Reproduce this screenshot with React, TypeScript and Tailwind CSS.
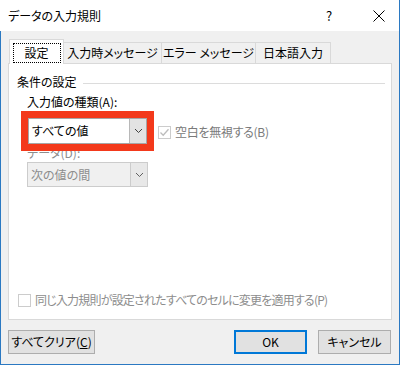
import React from "react";

const font = "font-['Meiryo_UI','Noto_Sans_CJK_JP',sans-serif] [font-feature-settings:'palt']";

function Chevron({ color = "#404040" }: { color?: string }) {
  return (
    <svg width="9" height="6" viewBox="0 0 9 6">
      <path d="M1 1 L4.5 4.5 L8 1" fill="none" stroke={color} strokeWidth="1" />
    </svg>
  );
}

function Check({ checked, disabled }: { checked?: boolean; disabled?: boolean }) {
  return (
    <div className={`w-[13px] h-[13px] border ${disabled ? "border-[#cccccc]" : "border-[#333]"} bg-white flex items-center justify-center shrink-0`}>
      {checked && (
        <svg width="11" height="11" viewBox="0 0 11 11">
          <path d="M1.5 5.5 L4.2 8.2 L9.5 2.2" fill="none" stroke="#bcbcbc" strokeWidth="1.3" />
        </svg>
      )}
    </div>
  );
}

export default function App() {
  return (
    <div className={`w-[400px] h-[365px] flex flex-col bg-white text-[12px] leading-[16px] text-black ${font}`}>
      {/* Title bar */}
      <div className="h-[31px] flex items-center bg-white border-r border-[#2b79c2] shrink-0">
        <div className="pl-[8px] flex-1 text-[12px]">データの入力規則</div>
        <div className="w-[14px] text-center text-[13px] mr-[37px]">?</div>
        <div className="mr-[14px] flex items-center">
          <svg width="12" height="12" viewBox="0 0 12 12">
            <path d="M0.5 0.5 L11.5 11.5 M11.5 0.5 L0.5 11.5" stroke="#000" strokeWidth="1" />
          </svg>
        </div>
      </div>

      {/* Body */}
      <div className="flex-1 bg-[#f0f0f0] border-l border-r border-b border-[#2b79c2] flex flex-col pl-[7px] pr-[8px]">
        {/* Tabs */}
        <div className="flex items-end h-[24px] mt-[8px] relative z-10 whitespace-nowrap">
          <div className="ml-[1px] w-[55px] h-[25px] -mb-px bg-white border border-b-0 border-[#d9d9d9] flex items-start justify-center pt-[3px]">
            <div className="w-[48px] h-[20px] border border-dotted border-black flex items-center justify-center">設定</div>
          </div>
          <div className="h-[21px] w-[98px] border border-l-0 border-b-0 border-[#d9d9d9] bg-[#f0f0f0] flex items-center justify-center">入力時メッセージ</div>
          <div className="h-[21px] w-[94px] border border-l-0 border-b-0 border-[#d9d9d9] bg-[#f0f0f0] flex items-center justify-center">エラー メッセージ</div>
          <div className="h-[21px] w-[75px] border border-l-0 border-b-0 border-[#d9d9d9] bg-[#f0f0f0] flex items-center justify-center">日本語入力</div>
        </div>

        {/* Panel */}
        <div className="w-[384px] h-[257px] bg-white border border-[#d9d9d9] flex flex-col">
          <div className="flex items-center mt-[10px] ml-[8px] mr-[6px]">
            <span>条件の設定</span>
            <div className="flex-1 h-px bg-[#dcdcdc] ml-[6px] mt-[2px]" />
          </div>
          <div className="ml-[18px] mt-[4px] h-[16px]">入力値の種類(A):</div>
          <div className="flex items-start mt-[1px] ml-[12px]">
            <div className="w-[133px] h-[40px] border-[7px] border-[#f3391b] flex relative z-10">
              <div className="flex-1 h-full border border-[#a6a6a6] bg-white flex items-center">
                <span className="flex-1 pl-[3px]">すべての値</span>
                <div className="w-[17px] h-full bg-[#e3e3e3] border-l border-[#b8b8b8] flex items-center justify-center">
                  <Chevron />
                </div>
              </div>
            </div>
            <div className="flex items-center ml-[4px] mt-[13px] text-[#7a7a7a]">
              <Check checked disabled />
              <span className="ml-[4px] tracking-[-0.3px]">空白を無視する(B)</span>
            </div>
          </div>
          <div className="ml-[18px] -mt-[6px] h-[16px] text-[#8d8d8d]">データ(D):</div>
          <div className="ml-[18px] mt-[1px] w-[121px] h-[25px] border border-[#cccccc] bg-[#f0f0f0] flex items-center text-[#8d8d8d]">
            <span className="flex-1 pl-[3px]">次の値の間</span>
            <div className="w-[17px] h-full bg-[#e8e8e8] border-l border-[#cccccc] flex items-center justify-center">
              <Chevron color="#606060" />
            </div>
          </div>
          <div className="flex-1" />
          <div className="flex items-center ml-[9px] mb-[11px] text-[#8d8d8d] whitespace-nowrap">
            <Check disabled />
            <span className="ml-[4px] tracking-[-0.8px]">同じ入力規則が設定されたすべてのセルに変更を適用する(P)</span>
          </div>
        </div>

        {/* Buttons */}
        <div className="flex items-center mt-[10px]">
          <div className="w-[87px] h-[24px] bg-[#e1e1e1] border border-[#adadad] flex items-center justify-center">
            すべてクリア(<span className="underline">C</span>)
          </div>
          <div className="flex-1" />
          <div className="w-[73px] h-[24px] bg-[#e1e1e1] border-2 border-[#0078d7] flex items-center justify-center">OK</div>
          <div className="w-[73px] h-[24px] ml-[11px] bg-[#e1e1e1] border border-[#adadad] flex items-center justify-center">キャンセル</div>
        </div>
      </div>
    </div>
  );
}
